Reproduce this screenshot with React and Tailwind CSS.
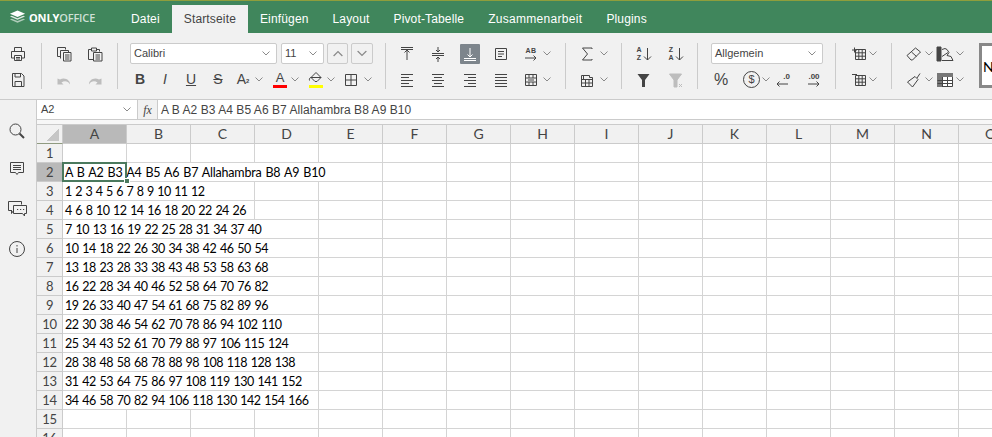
import React from 'react';

const columns = ['A', 'B', 'C', 'D', 'E', 'F', 'G', 'H', 'I', 'J', 'K', 'L', 'M', 'N', 'O'];

const rows = [
  { n: 1, text: '', span: '', used: 1 },
  { n: 2, text: 'A B A2 B3 A4 B5 A6 B7 Allahambra B8 A9 B10', span: 'col-span-5 tracking-[-0.2px]', used: 5 },
  { n: 3, text: '1 2 3 4 5 6 7 8 9 10 11 12', span: 'col-span-3 tracking-[-0.6px]', used: 3 },
  { n: 4, text: '4 6 8 10 12 14 16 18 20 22 24 26', span: 'col-span-3 tracking-[-0.55px]', used: 3 },
  { n: 5, text: '7 10 13 16 19 22 25 28 31 34 37 40', span: 'col-span-4 tracking-[-0.49px]', used: 4 },
  { n: 6, text: '10 14 18 22 26 30 34 38 42 46 50 54', span: 'col-span-4 tracking-[-0.49px]', used: 4 },
  { n: 7, text: '13 18 23 28 33 38 43 48 53 58 63 68', span: 'col-span-4 tracking-[-0.49px]', used: 4 },
  { n: 8, text: '16 22 28 34 40 46 52 58 64 70 76 82', span: 'col-span-4 tracking-[-0.49px]', used: 4 },
  { n: 9, text: '19 26 33 40 47 54 61 68 75 82 89 96', span: 'col-span-4 tracking-[-0.49px]', used: 4 },
  { n: 10, text: '22 30 38 46 54 62 70 78 86 94 102 110', span: 'col-span-4 tracking-[-0.49px]', used: 4 },
  { n: 11, text: '25 34 43 52 61 70 79 88 97 106 115 124', span: 'col-span-4 tracking-[-0.49px]', used: 4 },
  { n: 12, text: '28 38 48 58 68 78 88 98 108 118 128 138', span: 'col-span-4 tracking-[-0.49px]', used: 4 },
  { n: 13, text: '31 42 53 64 75 86 97 108 119 130 141 152', span: 'col-span-4 tracking-[-0.49px]', used: 4 },
  { n: 14, text: '34 46 58 70 82 94 106 118 130 142 154 166', span: 'col-span-4 tracking-[-0.49px]', used: 4 },
  { n: 15, text: '', span: '', used: 1 },
  { n: 16, text: '', span: '', used: 1 },
];

const tabs = ['Datei', 'Startseite', 'Einfügen', 'Layout', 'Pivot-Tabelle', 'Zusammenarbeit', 'Plugins'];

function Svg({ children, color = '#444' }) {
  return (
    <svg width="20" height="20" viewBox="0 0 20 20" fill="none" stroke={color} strokeWidth="1" className="block">
      {children}
    </svg>
  );
}

function Chevron({ className = '' }) {
  return (
    <svg width="8" height="5" viewBox="0 0 8 5" fill="none" stroke="#8a8a8a" strokeWidth="1" className={`block shrink-0 ${className}`}>
      <path d="M0.5 0.5 4 4 7.5 0.5" />
    </svg>
  );
}

function Slot({ className = '', children }) {
  return <div className={`flex h-5 w-5 shrink-0 items-center justify-center text-[#444] ${className}`}>{children}</div>;
}

function Combo({ className, label }) {
  return (
    <div className={`flex h-[21px] items-center justify-between rounded-[2px] border border-[#cbcbcb] bg-white pl-[3px] pr-[6px] text-[11px] text-[#444] ${className}`}>
      <span>{label}</span>
      <Chevron />
    </div>
  );
}

function Group({ className, top, bottom }) {
  return (
    <div className={`flex shrink-0 flex-col gap-[5px] ${className}`}>
      <div className="flex h-[21px] items-center">{top}</div>
      <div className="flex h-[21px] items-center">{bottom}</div>
    </div>
  );
}

function Sep() {
  return <div className="h-[46px] w-px shrink-0 bg-[#cbcbcb]" />;
}

function Toolbar() {
  return (
    <div className="flex h-[67px] shrink-0 border-b border-[#cbcbcb] bg-[#f1f1f1] pt-[10px]">
      <Group
        className="w-[41px]"
        top={<Slot className="ml-2"><Svg><path d="M6.5 7V3.5h7V7M6.5 14H3.5V7.5h13V14h-3M6.5 11.5h7v5h-7zM8 13.5h4M8 15h4" /></Svg></Slot>}
        bottom={<Slot className="ml-2"><Svg><path d="M4.5 3.5h9l2.5 2.5v10.500h-11.500zM7 3.500v3.500h5.500v-3.500M7 16.500v-5h6.500v5" /></Svg></Slot>}
      />
      <Sep />
      <Group
        className="w-[75px]"
        top={
          <>
            <Slot className="ml-[12px]"><Svg><path d="M3.500 3.500h8v2M3.500 3.500v9h3M6.500 6.500h8v2M6.500 6.500v8M9.500 8.500h7.500v8.500h-7.500zM11 11h4.500M11 13h4.500M11 15h4.500" /></Svg></Slot>
            <Slot className="ml-[11px]"><Svg><path d="M6.500 5.500h-3v10h5M11.500 5.500h3v2M6.500 4h5v3h-5zM8.500 8.500h8.500v8.500h-8.500zM10.500 11h4.500M10.500 13h4.500M10.500 15h4.500" /></Svg></Slot>
          </>
        }
        bottom={
          <>
            <Slot className="ml-[12px]"><svg width="20" height="20" viewBox="0 0 20 20" fill="#bdbdbd"><path d="M3.500 8.500v6h6l-2-2c3-2 6.500-1.500 8.500 2 .5-4-5-8-10-5z" /></svg></Slot>
            <Slot className="ml-[11px]"><svg width="20" height="20" viewBox="0 0 20 20" fill="#bdbdbd"><path d="M16.500 8.500v6h-6l2-2c-3-2-6.500-1.500-8.500 2-.5-4 5-8 10-5z" /></svg></Slot>
          </>
        }
      />
      <Sep />
      <Group
        className="w-[267px]"
        top={
          <>
            <Combo className="ml-[12px] w-[147px]" label="Calibri" />
            <Combo className="ml-[4px] w-[43px]" label="11" />
            <div className="ml-[3px] flex h-[21px] w-[21px] items-center justify-center rounded-[2px] border border-[#cbcbcb]"><Chevron className="rotate-180 scale-125" /></div>
            <div className="ml-[3px] flex h-[21px] w-[22px] items-center justify-center rounded-[2px] border border-[#cbcbcb]"><Chevron className="scale-125" /></div>
          </>
        }
        bottom={
          <>
            <Slot className="ml-[12px] text-[14px] font-bold">B</Slot>
            <Slot className="ml-[5px] text-[14px] italic">I</Slot>
            <Slot className="ml-[6px] text-[14px] underline">U</Slot>
            <Slot className="ml-[7px] text-[14px] line-through">S</Slot>
            <Slot className="ml-[5px] text-[14px]">A<span className="mt-1 text-[6px] font-bold">2</span></Slot>
            <Chevron className="ml-[2px]" />
            <Slot className="ml-[7px] flex-col text-[13px] leading-[14px]">A<span className="h-[3px] w-[14px] bg-[#ff0000]" /></Slot>
            <Chevron className="ml-[1px]" />
            <Slot className="ml-[7px] flex-col">
              <svg width="16" height="14" viewBox="0 0 16 14" fill="none" stroke="#444" className="block"><path d="M3 6.500 8 1.500l5 5-4 4h-2zM3 6.500c-1 0-2 1-1.500 3M3 6.500h10" /></svg>
              <span className="h-[3px] w-[14px] bg-[#ffff00]" />
            </Slot>
            <Chevron className="ml-[1px]" />
            <Slot className="ml-[6px]"><Svg><path d="M4.500 4.500h11v11h-11zM10 4.500v11M4.500 10h11" /></Svg></Slot>
            <Chevron className="ml-[3px]" />
          </>
        }
      />
      <Sep />
      <Group
        className="w-[179px]"
        top={
          <>
            <Slot className="ml-[11px]"><Svg><path d="M4 3.500h12M10 16V6M7.500 8.500 10 6l2.500 2.500M4 5.500h12" /></Svg></Slot>
            <Slot className="ml-[11px]"><Svg><path d="M4 9.500h12M4 11.500h12M10 3v5M8 6l2 2 2-2M10 18v-5M8 15l2-2 2 2" /></Svg></Slot>
            <div className="ml-[12px] flex h-5 w-5 shrink-0 items-center justify-center rounded-[1px] bg-[#7d858c]"><Svg color="#fff"><path d="M4 14.500h12M4 16.500h12M10 4v9M7.500 10.500 10 13l2.500-2.500" /></Svg></div>
            <Slot className="ml-[11px]"><Svg><path d="M4.500 4.500h11v11h-11zM7 7.500h6M7 10h6M7 12.500h4" /></Svg></Slot>
            <Slot className="ml-[10px] flex-col">
              <span className="text-[7px] font-bold leading-[8px] tracking-[0.5px]">AB</span>
              <svg width="16" height="6" viewBox="0 0 16 6" fill="none" stroke="#444" className="block"><path d="M2 3h11M10.500.5 13 3l-2.500 2.500" /></svg>
            </Slot>
            <Chevron className="ml-[2px]" />
          </>
        }
        bottom={
          <>
            <Slot className="ml-[11px]"><Svg><path d="M4 4.500h12M4 7.500h8M4 10.500h12M4 13.500h8M4 16.500h12" /></Svg></Slot>
            <Slot className="ml-[11px]"><Svg><path d="M4 4.500h12M6 7.500h8M4 10.500h12M6 13.500h8M4 16.500h12" /></Svg></Slot>
            <Slot className="ml-[12px]"><Svg><path d="M4 4.500h12M8 7.500h8M4 10.500h12M8 13.500h8M4 16.500h12" /></Svg></Slot>
            <Slot className="ml-[11px]"><Svg><path d="M4 4.500h12M4 7.500h12M4 10.500h12M4 13.500h12M4 16.500h12" /></Svg></Slot>
            <Slot className="ml-[10px]"><Svg><path d="M4.500 4.500h11v11h-11zM4.500 8h11M4.500 12h11M8 4.500V8M12 4.500V8M8 12v3.500M12 12v3.500M7 10h6" /></Svg></Slot>
            <Chevron className="ml-[2px]" />
          </>
        }
      />
      <Sep />
      <Group
        className="w-[55px]"
        top={
          <>
            <Slot className="ml-[11px]"><Svg><path d="M15 5V4H5.500l5 6-5 6H15v-1" /></Svg></Slot>
            <Chevron className="ml-[3px]" />
          </>
        }
        bottom={
          <>
            <Slot className="ml-[11px]"><Svg><path d="M4.500 5.500h8v2h3v9h-11zM4.500 9.500h11M4.500 13h11M8.500 9.500v7M12 9.500v7M6.500 5.500v4" /></Svg></Slot>
            <Chevron className="ml-[3px]" />
          </>
        }
      />
      <Sep />
      <Group
        className="w-[75px]"
        top={
          <>
            <Slot className="ml-[12px] gap-[1px]">
              <span className="flex flex-col text-center text-[7px] font-bold leading-[8px]"><span>A</span><span>Z</span></span>
              <svg width="9" height="14" viewBox="0 0 9 14" fill="none" stroke="#444" className="block"><path d="M4.500 1v12M1 9.500l3.500 3.500L8 9.500" /></svg>
            </Slot>
            <Slot className="ml-[12px] gap-[1px]">
              <span className="flex flex-col text-center text-[7px] font-bold leading-[8px]"><span>Z</span><span>A</span></span>
              <svg width="9" height="14" viewBox="0 0 9 14" fill="none" stroke="#444" className="block"><path d="M4.500 1v12M1 9.500l3.500 3.500L8 9.500" /></svg>
            </Slot>
          </>
        }
        bottom={
          <>
            <Slot className="ml-[12px]"><svg width="20" height="20" viewBox="0 0 20 20" fill="#444"><path d="M3.500 4h12l-4.500 6v7h-3v-7z" /></svg></Slot>
            <Slot className="ml-[12px]"><svg width="20" height="20" viewBox="0 0 20 20" fill="#bdbdbd"><path d="M3.500 4h12l-4.500 6v7h-3v-7zM13 14l3 3M16 14l-3 3" stroke="#bdbdbd" /></svg></Slot>
          </>
        }
      />
      <Sep />
      <Group
        className="w-[137px]"
        top={<Combo className="ml-[13px] w-[112px]" label="Allgemein" />}
        bottom={
          <>
            <Slot className="ml-[13px] text-[16px]">%</Slot>
            <div className="ml-[12px] flex h-[17px] w-[17px] shrink-0 items-center justify-center rounded-full border border-[#444] text-[11px] text-[#444]">$</div>
            <Chevron className="ml-[2px]" />
            <Slot className="ml-[2px] flex-col text-[8px] font-bold leading-[8px]">
              <span className="self-end pr-[2px]">.0</span>
              <svg width="16" height="6" viewBox="0 0 16 6" fill="none" stroke="#444" className="block"><path d="M3 3h11M5.500.5 3 3l2.500 2.500" /></svg>
            </Slot>
            <Slot className="ml-[12px] flex-col text-[8px] font-bold leading-[8px]">
              <span>.00</span>
              <svg width="16" height="6" viewBox="0 0 16 6" fill="none" stroke="#444" className="block"><path d="M2 3h11M10.500.5 13 3l-2.500 2.500" /></svg>
            </Slot>
          </>
        }
      />
      <Sep />
      <Group
        className="w-[55px]"
        top={
          <>
            <Slot className="ml-[13px]"><Svg><path d="M6.500 5.500h10v10h-10zM6.500 8.800h10M6.500 12.200h10M9.800 5.500v10M13.200 5.500v10M3 6h5M5.500 3.500v5" /></Svg></Slot>
            <Chevron />
          </>
        }
        bottom={
          <>
            <Slot className="ml-[13px]"><Svg><path d="M6.500 5.500h10v10h-10zM6.500 8.800h10M6.500 12.200h10M9.800 5.500v10M13.200 5.500v10M3 4.500h5" /></Svg></Slot>
            <Chevron />
          </>
        }
      />
      <Sep />
      <Group
        className="w-[87px]"
        top={
          <>
            <Slot className="ml-[12px]"><Svg><path d="M3 11.500 11.500 4l5 4-8 8H7zM7.500 8l5 4.500" /></Svg></Slot>
            <Chevron className="ml-[1px]" />
            <Slot className="ml-[2px]">
              <svg width="20" height="20" viewBox="0 0 20 20" fill="none" stroke="#444" className="block"><path d="M2 3h4v14H2z" fill="#444" /><path d="M7 16.500h11l-2-4-4-1 2-3-2-3-2-1-3 1M7 12.500l6-4" /></svg>
            </Slot>
            <Chevron className="ml-[1px]" />
          </>
        }
        bottom={
          <>
            <Slot className="ml-[12px]"><Svg><path d="M3.500 12 11 6.500l3 3-5.500 7.500zM13 8l3-4.500" /></Svg></Slot>
            <Chevron className="ml-[1px]" />
            <Slot className="ml-[2px]">
              <svg width="20" height="20" viewBox="0 0 20 20" fill="none" stroke="#444" className="block"><path d="M2.500 3.500h15v13h-15z" fill="#fff" /><path d="M2 3h16v4H2zM2 7h5v10H2z" fill="#777" stroke="none" /><path d="M2.500 10.500h15M2.500 13.500h15M7.500 7v10M12.500 7v10" /></svg>
            </Slot>
            <Chevron className="ml-[1px]" />
          </>
        }
      />
      <div className="h-[45px] w-[60px] shrink-0 border-[3px] border-[#888] bg-white pl-[1px] pt-[10px] font-['Lato',sans-serif] text-[14px] text-black">Normal</div>
    </div>
  );
}

function Sidebar() {
  return (
    <div className="flex w-[37px] shrink-0 flex-col items-center gap-[20px] border-r border-[#cbcbcb] bg-[#f1f1f1] pt-[2px]">
      <svg width="18" height="18" viewBox="0 0 18 18" fill="none" stroke="#444" className="-ml-[2px] block">
        <circle cx="7.500" cy="7.500" r="5.500" />
        <path d="M11.500 11.500 16 16" strokeWidth="2" />
      </svg>
      <svg width="18" height="18" viewBox="0 0 18 18" fill="none" stroke="#444" className="-ml-[2px] block">
        <path d="M2.500 2.500h13v10h-5l-1.500 2-1.500-2h-5zM5 5.500h8M5 7.500h8M5 9.500h8" />
      </svg>
      <svg width="20" height="22" viewBox="0 0 20 22" fill="none" stroke="#444" className="-ml-[2px] block">
        <path d="M5 12.500H1.500v-9h13v3M4.500 12.500v3l2-3M6.500 7.500h13v8h-2v2.500l-2-2.500h-9zM10 11.500h1.200M13 11.500h1.200M16 11.500h1.200" />
      </svg>
      <svg width="18" height="18" viewBox="0 0 18 18" fill="none" stroke="#444" className="-ml-[2px] block">
        <circle cx="9" cy="9" r="7.500" />
        <path d="M9 8v5M9 5v1.500" />
      </svg>
    </div>
  );
}

function Sheet() {
  return (
    <div className="min-w-0 flex-1 overflow-hidden bg-white font-['Lato',sans-serif]">
      <div className="h-[5px] border-b border-[#cbcbcb] bg-[#f7f7f7]" />
      <div className="grid w-[986px] grid-cols-[26px_repeat(15,64px)] text-[14px] leading-[18px] text-[#444]">
        <div className="flex h-[19px] items-end justify-end border-b border-r border-[#8f9a80] border-r-[#cbcbcb] bg-[#f1f1f1] pb-[2px] pr-[3px]">
          <div className="h-3 w-3 bg-[linear-gradient(135deg,transparent_50%,#c6c6c6_50%)]" />
        </div>
        {columns.map((c) => (
          <div key={c} className={`h-[19px] border-b border-r border-[#cbcbcb] text-center ${c === 'A' ? 'bg-[#b9b9b9]' : 'bg-[#f1f1f1]'}`}>{c}</div>
        ))}
      </div>
      {rows.map((r) => (
        <div key={r.n} className="grid w-[986px] grid-cols-[26px_repeat(15,64px)] text-[12.5px] leading-[18px]">
          <div className={`h-[19px] border-b border-r border-[#cbcbcb] text-center text-[13px] tracking-[-0.3px] text-[#444] ${r.n === 2 ? 'bg-[#b9b9b9]' : 'bg-[#f1f1f1]'}`}>{r.n}</div>
          <div className={`relative h-[19px] whitespace-nowrap border-b border-r border-[#d4d4d4] pl-[2px] leading-[20px] text-black [word-spacing:1px] ${r.span}`}>
            {r.text}
            {r.n === 2 && (
              <div className="absolute -left-px -top-px h-[20px] w-[65px] border-2 border-[#4b7a5e]">
                <div className="absolute -bottom-[4px] -right-[5px] h-[6px] w-[6px] border border-white bg-[#4b7a5e]" />
              </div>
            )}
          </div>
          {columns.slice(r.used).map((c) => (
            <div key={c} className="h-[19px] border-b border-r border-[#d4d4d4]" />
          ))}
        </div>
      ))}
    </div>
  );
}

export default function App() {
  return (
    <div className="flex h-[437px] w-[992px] flex-col overflow-hidden bg-white font-['Liberation_Sans',Arial,sans-serif] text-[#444]">
      {/* title bar with tabs */}
      <div className="flex h-[33px] shrink-0 items-end border-t border-[#8f9e3c] bg-[#40865c]">
        <div className="flex h-[32px] w-[119px] shrink-0 items-start pl-[9px] pt-[9px]">
          <svg width="17" height="15" viewBox="0 0 18 15" className="block shrink-0">
            <path d="M9 0 17 3.500 9 7 1 3.500z" fill="#fff" />
            <path d="M1 6.500 3 5.700 9 8.300 15 5.700 17 6.500 9 10z" fill="#dfe9e3" />
            <path d="M1 9.500 3 8.700 9 11.300 15 8.700 17 9.500 9 13z" fill="#aecbb9" />
          </svg>
          <span className="ml-[3px] font-['Open_Sans',sans-serif] text-[11px] font-bold leading-[15px] tracking-[-0.15px] text-white">ONLY<span className="font-semibold text-[#cfe0d6]">OFFICE</span></span>
        </div>
        {tabs.map((t) => (
          <div key={t} className={`flex h-[28px] items-center px-3 text-[12px] ${t === 'Zusammenarbeit' ? 'tracking-[0.3px]' : 'tracking-[0.15px]'} ${t === 'Startseite' ? 'bg-[#f1f1f1] text-[#444]' : 'text-white'}`}>{t}</div>
        ))}
      </div>
      <Toolbar />
      <div className="flex min-h-0 flex-1 bg-[#f1f1f1]">
        <div className="flex min-w-0 flex-1 flex-col">
          {/* formula bar */}
          <div className="flex h-5 shrink-0 pl-[36px]">
            <div className="flex flex-1 border-b border-l border-[#cbcbcb]">
              <div className="flex w-[100px] items-center justify-between bg-white pl-[4px] pr-[6px] text-[11px]">
                <span>A2</span>
                <Chevron />
              </div>
              <div className="flex w-[21px] items-center justify-center border-x border-[#cbcbcb] font-['Liberation_Serif',serif] text-[12px] italic">fx</div>
              <div className="flex flex-1 items-center bg-white pl-[3px] text-[12px] tracking-[0.05px]">A B A2 B3 A4 B5 A6 B7 Allahambra B8 A9 B10</div>
            </div>
          </div>
          <div className="flex min-h-0 flex-1">
            <Sidebar />
            <Sheet />
          </div>
        </div>
      </div>
    </div>
  );
}
